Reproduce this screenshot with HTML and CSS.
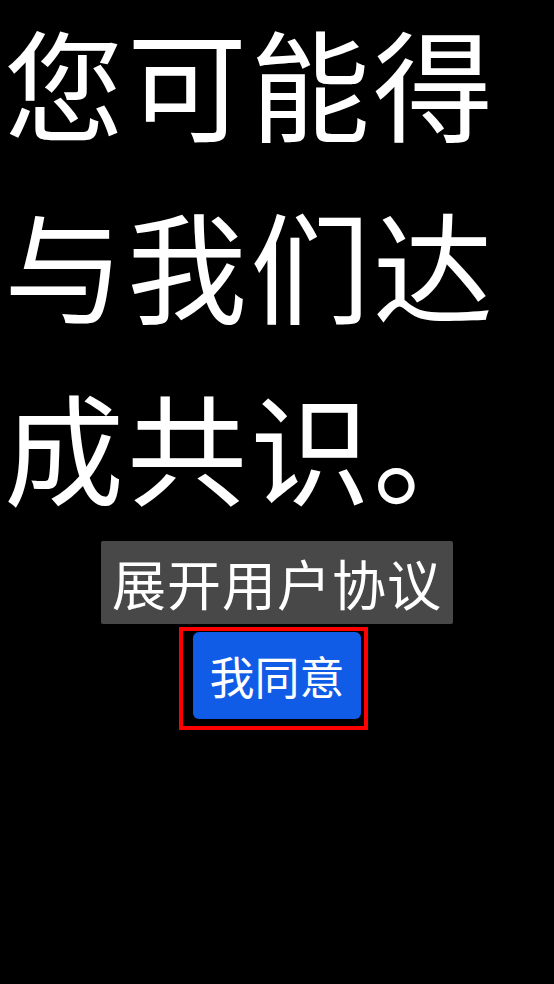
FILE: index.html
```html
<!DOCTYPE html>
<html lang="zh-CN">
<head>
<meta charset="utf-8">
<title>用户协议</title>
<link rel="stylesheet" href="styles.css">
</head>
<body>
<main class="page">
  <h1 class="headline">您可能得与我们达成共识。</h1>
  <div class="actions">
    <button class="btn-expand" type="button">展开用户协议</button>
    <div class="agree-wrap">
      <button class="btn-agree" type="button">我同意</button>
    </div>
  </div>
</main>
</body>
</html>
```
FILE: styles.css
```css
html, body {
  background: #000;
}
body {
  margin: 0;
  font-family: "Noto Sans CJK SC", "Noto Sans", sans-serif;
  color: #fff;
}
.page {
  padding: 0 4px;
}
.headline {
  margin: 0;
  font-family: "Liberation Sans", "Noto Sans CJK SC", sans-serif;
  font-size: 120px;
  line-height: 182px;
  font-weight: 400;
  letter-spacing: 3px;
  color: #fff;
}
.actions {
  display: flex;
  flex-direction: column;
  align-items: center;
  gap: 3px;
  margin-top: -5px;
}
.btn-expand {
  font-family: inherit;
  font-size: 54px;
  line-height: 83px;
  letter-spacing: 1px;
  white-space: nowrap;
  color: #fff;
  background: #484848;
  border: none;
  border-radius: 2px;
  padding: 0;
  width: 352px;
  height: 83px;
}
.agree-wrap {
  border: 4px solid #ff0000;
  padding: 1px 3px 7px 10px;
  margin-right: 7px;
}
.btn-agree {
  display: block;
  font-family: inherit;
  font-size: 45px;
  line-height: 67px;
  color: #fff;
  background: #105ce6;
  border: none;
  border-radius: 6px;
  padding: 10px 0;
  width: 168px;
  height: 87px;
}
```
